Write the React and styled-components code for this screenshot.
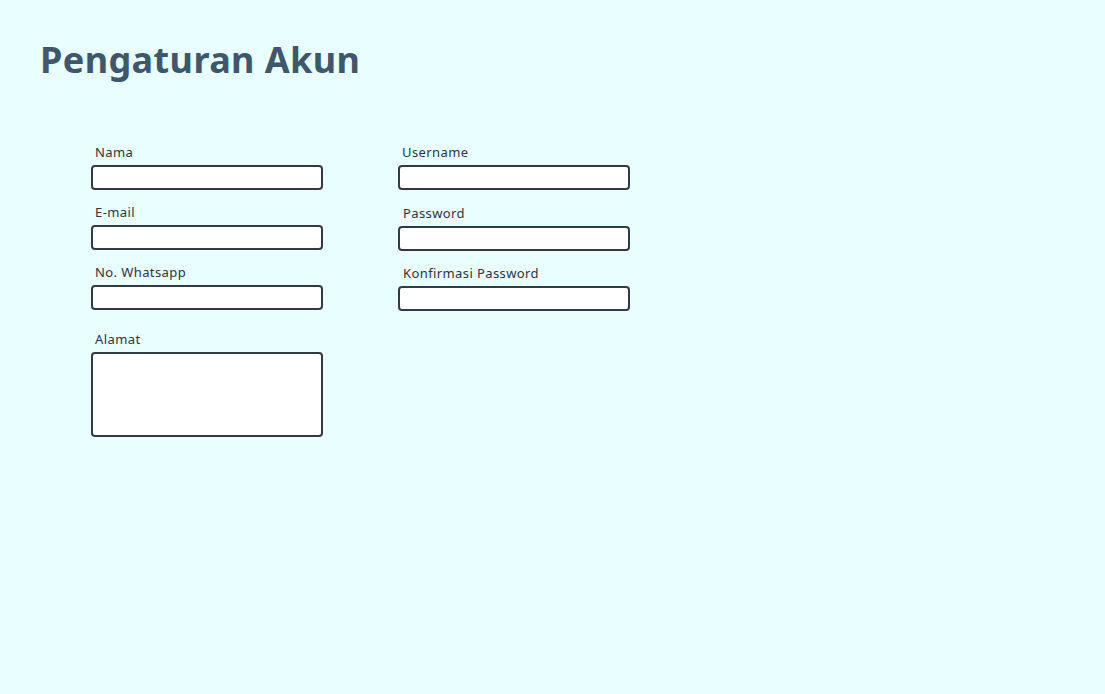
import React from 'react'
import styled, { createGlobalStyle } from 'styled-components'

const GlobalStyle = createGlobalStyle`
  html, body {
    margin: 0;
    padding: 0;
    background: #e9feff;
  }
  body {
    font-family: "Noto Sans", "Open Sans", sans-serif;
    color: #2b3440;
  }
`

const Page = styled.div`
  min-height: 694px;
  box-sizing: border-box;
  padding: 38px 40px 40px;
  background: #e9feff;
`

const Title = styled.h1`
  margin: 0;
  font-size: 36px;
  font-weight: 700;
  line-height: 44px;
  color: #3d576b;
  letter-spacing: 0.4px;
`

const Form = styled.form`
  display: grid;
  grid-template-columns: 232px 232px;
  column-gap: 75px;
  margin: 63px 0 0 51px;
  align-items: start;
`

const Column = styled.div`
  display: flex;
  flex-direction: column;
  gap: 15px;
`

const Field = styled.div`
  display: flex;
  flex-direction: column;
  gap: 5px;
  margin-top: ${(p) => p.$extra || 0}px;
`

const Label = styled.label`
  font-size: 13px;
  line-height: 15px;
  padding-left: ${(p) => p.$indent || 4}px;
  letter-spacing: 0.4px;
  color: #2b3440;
`

const Input = styled.input`
  box-sizing: border-box;
  width: 232px;
  height: 25px;
  border: 2px solid #323a46;
  border-radius: 4px;
  background: #fff;
  outline: none;
  padding: 0 6px;
  font-family: inherit;
`

const TextArea = styled.textarea`
  box-sizing: border-box;
  width: 232px;
  height: 85px;
  border: 2px solid #323a46;
  border-radius: 4px;
  background: #fff;
  outline: none;
  resize: none;
  padding: 4px 6px;
  font-family: inherit;
  display: block;
`

const App = () => {
    return (
        <>
            <GlobalStyle />
            <Page>
                <Title>Pengaturan Akun</Title>
                <Form onSubmit={(e) => e.preventDefault()}>
                    <Column>
                        <Field>
                            <Label>Nama</Label>
                            <Input type="text" />
                        </Field>
                        <Field>
                            <Label>E-mail</Label>
                            <Input type="email" />
                        </Field>
                        <Field>
                            <Label>No. Whatsapp</Label>
                            <Input type="text" />
                        </Field>
                        <Field $extra={7}>
                            <Label>Alamat</Label>
                            <TextArea />
                        </Field>
                    </Column>
                    <Column>
                        <Field>
                            <Label>Username</Label>
                            <Input type="text" />
                        </Field>
                        <Field $extra={1}>
                            <Label $indent={5}>Password</Label>
                            <Input type="password" />
                        </Field>
                        <Field>
                            <Label $indent={5}>Konfirmasi Password</Label>
                            <Input type="password" />
                        </Field>
                    </Column>
                </Form>
            </Page>
        </>
    )
}

export default App
